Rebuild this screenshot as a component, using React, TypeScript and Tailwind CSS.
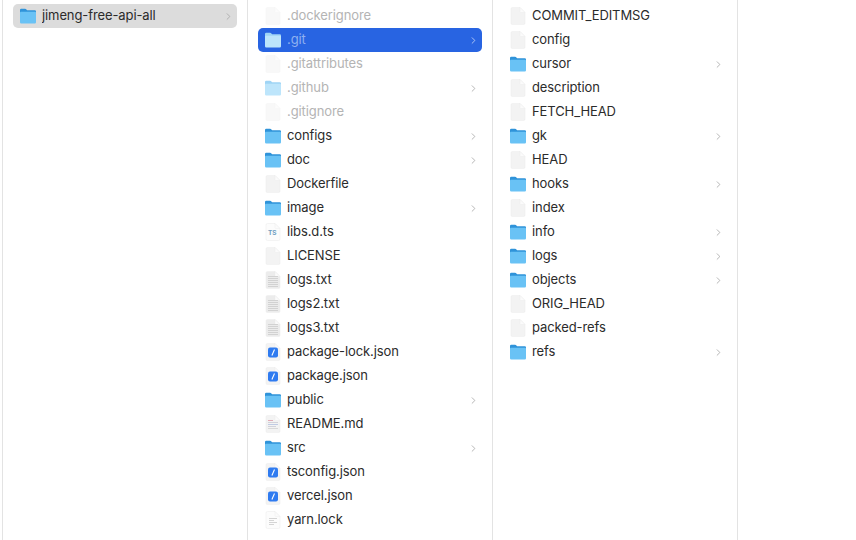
import { ChevronRight } from 'lucide-react';

type Kind = 'folder' | 'blank' | 'text' | 'json' | 'ts' | 'md' | 'lock';

interface Entry {
  name: string;
  kind: Kind;
  dim?: boolean;
  selected?: boolean;
}

const rootColumn: Entry[] = [{ name: 'jimeng-free-api-all', kind: 'folder', selected: true }];

const projectColumn: Entry[] = [
  { name: '.dockerignore', kind: 'blank', dim: true },
  { name: '.git', kind: 'folder', dim: true, selected: true },
  { name: '.gitattributes', kind: 'blank', dim: true },
  { name: '.github', kind: 'folder', dim: true },
  { name: '.gitignore', kind: 'blank', dim: true },
  { name: 'configs', kind: 'folder' },
  { name: 'doc', kind: 'folder' },
  { name: 'Dockerfile', kind: 'blank' },
  { name: 'image', kind: 'folder' },
  { name: 'libs.d.ts', kind: 'ts' },
  { name: 'LICENSE', kind: 'blank' },
  { name: 'logs.txt', kind: 'text' },
  { name: 'logs2.txt', kind: 'text' },
  { name: 'logs3.txt', kind: 'text' },
  { name: 'package-lock.json', kind: 'json' },
  { name: 'package.json', kind: 'json' },
  { name: 'public', kind: 'folder' },
  { name: 'README.md', kind: 'md' },
  { name: 'src', kind: 'folder' },
  { name: 'tsconfig.json', kind: 'json' },
  { name: 'vercel.json', kind: 'json' },
  { name: 'yarn.lock', kind: 'lock' },
];

const gitColumn: Entry[] = [
  { name: 'COMMIT_EDITMSG', kind: 'blank' },
  { name: 'config', kind: 'blank' },
  { name: 'cursor', kind: 'folder' },
  { name: 'description', kind: 'blank' },
  { name: 'FETCH_HEAD', kind: 'blank' },
  { name: 'gk', kind: 'folder' },
  { name: 'HEAD', kind: 'blank' },
  { name: 'hooks', kind: 'folder' },
  { name: 'index', kind: 'blank' },
  { name: 'info', kind: 'folder' },
  { name: 'logs', kind: 'folder' },
  { name: 'objects', kind: 'folder' },
  { name: 'ORIG_HEAD', kind: 'blank' },
  { name: 'packed-refs', kind: 'blank' },
  { name: 'refs', kind: 'folder' },
];

function FolderIcon({ light }: { light: boolean }) {
  return (
    <svg width="16" height="16" viewBox="0 0 16 16">
      <path
        d="M0 2a1.2 1.2 0 0 1 1.2-1.2h3.8c.7 0 1 .2 1.4.6l.8.8h7.6A1.2 1.2 0 0 1 16 3.4V6H0z"
        fill={light ? '#9fd4f5' : '#2f93d9'}
      />
      <path
        d="M0 4.8a1 1 0 0 1 1-1h14a1 1 0 0 1 1 1v9.4a1.2 1.2 0 0 1-1.2 1.2H1.2a1.2 1.2 0 0 1-1.2-1.2z"
        fill={light ? '#bde5fb' : '#69c2f5'}
      />
    </svg>
  );
}

function PageIcon({ kind, dim }: { kind: Kind; dim?: boolean }) {
  const paper = kind === 'lock' || kind === 'ts' ? '#fcfcfc' : kind === 'text' ? '#ececec' : '#f3f3f3';
  return (
    <svg width="16" height="18" viewBox="0 0 16 18" className={dim ? 'opacity-50' : ''}>
      <path
        d="M2.5 .5h7.5l5 5v10.5a1.5 1.5 0 0 1-1.5 1.5h-11a1.5 1.5 0 0 1-1.5-1.5v-14a1.5 1.5 0 0 1 1.5-1.5z"
        fill={paper}
        stroke="#eeeeee"
        strokeWidth="0.6"
      />
      <path d="M10 .5v4a1 1 0 0 0 1 1h4z" fill="#fbfbfb" stroke="#eaeaea" strokeWidth="0.4" />
      {kind === 'text' &&
        [5, 7, 9, 11, 13, 15].map((y) => <rect key={y} x="3" y={y} width="10" height="1" fill="#d2d2d2" />)}
      {kind === 'lock' &&
        [7, 9, 11, 13].map((y, i) => <rect key={y} x="4" y={y} width={i % 2 ? 5 : 8} height="1" fill="#d4d4d4" />)}
      {kind === 'md' && (
        <>
          <rect x="3" y="5" width="5" height="1" fill="#e0aab6" />
          <rect x="3" y="7" width="10" height="1" fill="#d2d2da" />
          <rect x="3" y="9" width="10" height="1" fill="#c0cbe4" />
          <rect x="3" y="11" width="8" height="1" fill="#d2d2da" />
          <rect x="3" y="13" width="10" height="1" fill="#d8d8d8" />
        </>
      )}
      {kind === 'json' && (
        <>
          <rect x="3" y="4.5" width="10" height="10" rx="2" fill="#2f7bf0" />
          <path d="M9.5 6.5l-2.6 6" stroke="#ffffff" strokeWidth="1.1" />
        </>
      )}
    </svg>
  );
}

function Row({ entry }: { entry: Entry }) {
  const isFolder = entry.kind === 'folder';
  const active = entry.selected && entry.name === '.git';
  return (
    <div
      className={`mx-[10px] flex h-6 items-center rounded-[5px] pl-[7px] pr-[3px] ${
        entry.selected ? (active ? 'bg-[#2864e2]' : 'bg-[#dcdcdc]') : ''
      }`}
    >
      <span className="relative flex w-4 shrink-0 items-center justify-center">
        {isFolder ? <FolderIcon light={!!entry.dim} /> : <PageIcon kind={entry.kind} dim={entry.dim} />}
        {entry.kind === 'ts' && (
          <span className="absolute top-[6px] left-[3px] text-[6.5px] leading-[9px] font-bold text-[#6d9dc0]">TS</span>
        )}
      </span>
      <span
        className={`ml-[6px] flex-1 truncate text-[13px] tracking-[-0.1px] ${
          active ? 'text-[#8fb0f0]' : entry.dim ? 'text-[#b4b4b4]' : 'text-[#2b2b2b]'
        }`}
      >
        {entry.name}
      </span>
      {isFolder && (
        <ChevronRight size={11} strokeWidth={1.8} className={active ? 'text-[#c6d6f7]' : 'text-[#a8a8a8]'} />
      )}
    </div>
  );
}

function Column({ entries, last }: { entries: Entry[]; last?: boolean }) {
  return (
    <div className={`h-full shrink-0 border-l border-[#e3e3e3] pt-[4px] ${last ? 'w-[246px] border-r' : 'w-[245px]'}`}>
      {entries.map((entry) => (
        <Row key={entry.name} entry={entry} />
      ))}
    </div>
  );
}

export default function App() {
  return (
    <div className="flex h-[540px] w-[856px] overflow-hidden bg-white pl-[2px] font-['Inter','Liberation_Sans',sans-serif]">
      <Column entries={rootColumn} />
      <Column entries={projectColumn} />
      <Column entries={gitColumn} last />
    </div>
  );
}
